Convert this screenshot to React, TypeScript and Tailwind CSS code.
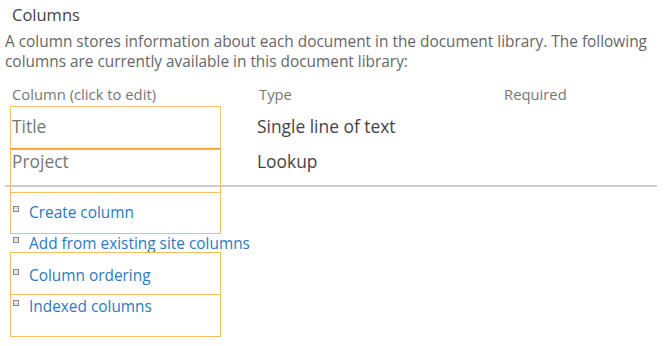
import React from "react";

const links = ["Create column", "Add from existing site columns", "Column ordering", "Indexed columns"];
const linkH = ["h-[31px]", "h-[32px]", "h-[31px]", "h-[31px]"];

export default function App() {
  return (
    <div className="relative w-[667px] h-[346px] overflow-hidden bg-white font-['Open_Sans',sans-serif]">
      <div className="pt-[4px] pl-[12px] text-[16.5px] leading-[22px] text-[#444]">Columns</div>
      <p className="mt-[6px] px-[5px] text-[15.4px] leading-[19.5px] text-[#666]">
        A column stores information about each document in the document library. The following columns are currently available in this document library:
      </p>
      <div className="mt-[14px] grid grid-cols-[247px_245px_1fr] pl-[12px] text-[14.8px] leading-[18px] text-[#777]">
        <div>Column (click to edit)</div>
        <div>Type</div>
        <div>Required</div>
      </div>
      <div className="mt-[6px] pl-[12px] text-[17.4px]">
        <div className="grid h-[35px] grid-cols-[245px_1fr] items-center">
          <div className="text-[#777]">Title</div>
          <div className="text-[#444]">Single line of text</div>
        </div>
        <div className="grid h-[35px] grid-cols-[245px_1fr] items-center">
          <div className="text-[#777]">Project</div>
          <div className="text-[#444]">Lookup</div>
        </div>
      </div>
      <div className="mt-[6px] ml-[5px] h-[2px] w-[652px] bg-[#cdcdcd]" />
      <div className="mt-[10px] pl-[13px] text-[15.4px] text-[#2a7bbf]">
        {links.map((l, i) => (
          <div key={l} className={`flex items-center gap-[10px] ${linkH[i]}`}>
            <span className="mb-[8px] h-[6px] w-[6px] border border-[#8a8a8a] bg-[#e4e4e4]" />
            <span>{l}</span>
          </div>
        ))}
      </div>
      {/* annotation boxes */}
      <div className="absolute left-[10px] top-[106px] h-[44px] w-[211px] border border-[#f3c46a] border-b-2 border-b-[#f29a2e]" />
      <div className="absolute left-[10px] top-[149px] h-[44px] w-[211px] border border-[#f3c060]" />
      <div className="absolute left-[10px] top-[192px] h-[42px] w-[211px] border border-[#f3c060]" />
      <div className="absolute left-[10px] top-[252px] h-[43px] w-[211px] border border-[#f3c060]" />
      <div className="absolute left-[10px] top-[294px] h-[43px] w-[211px] border border-[#f3c060]" />
    </div>
  );
}
